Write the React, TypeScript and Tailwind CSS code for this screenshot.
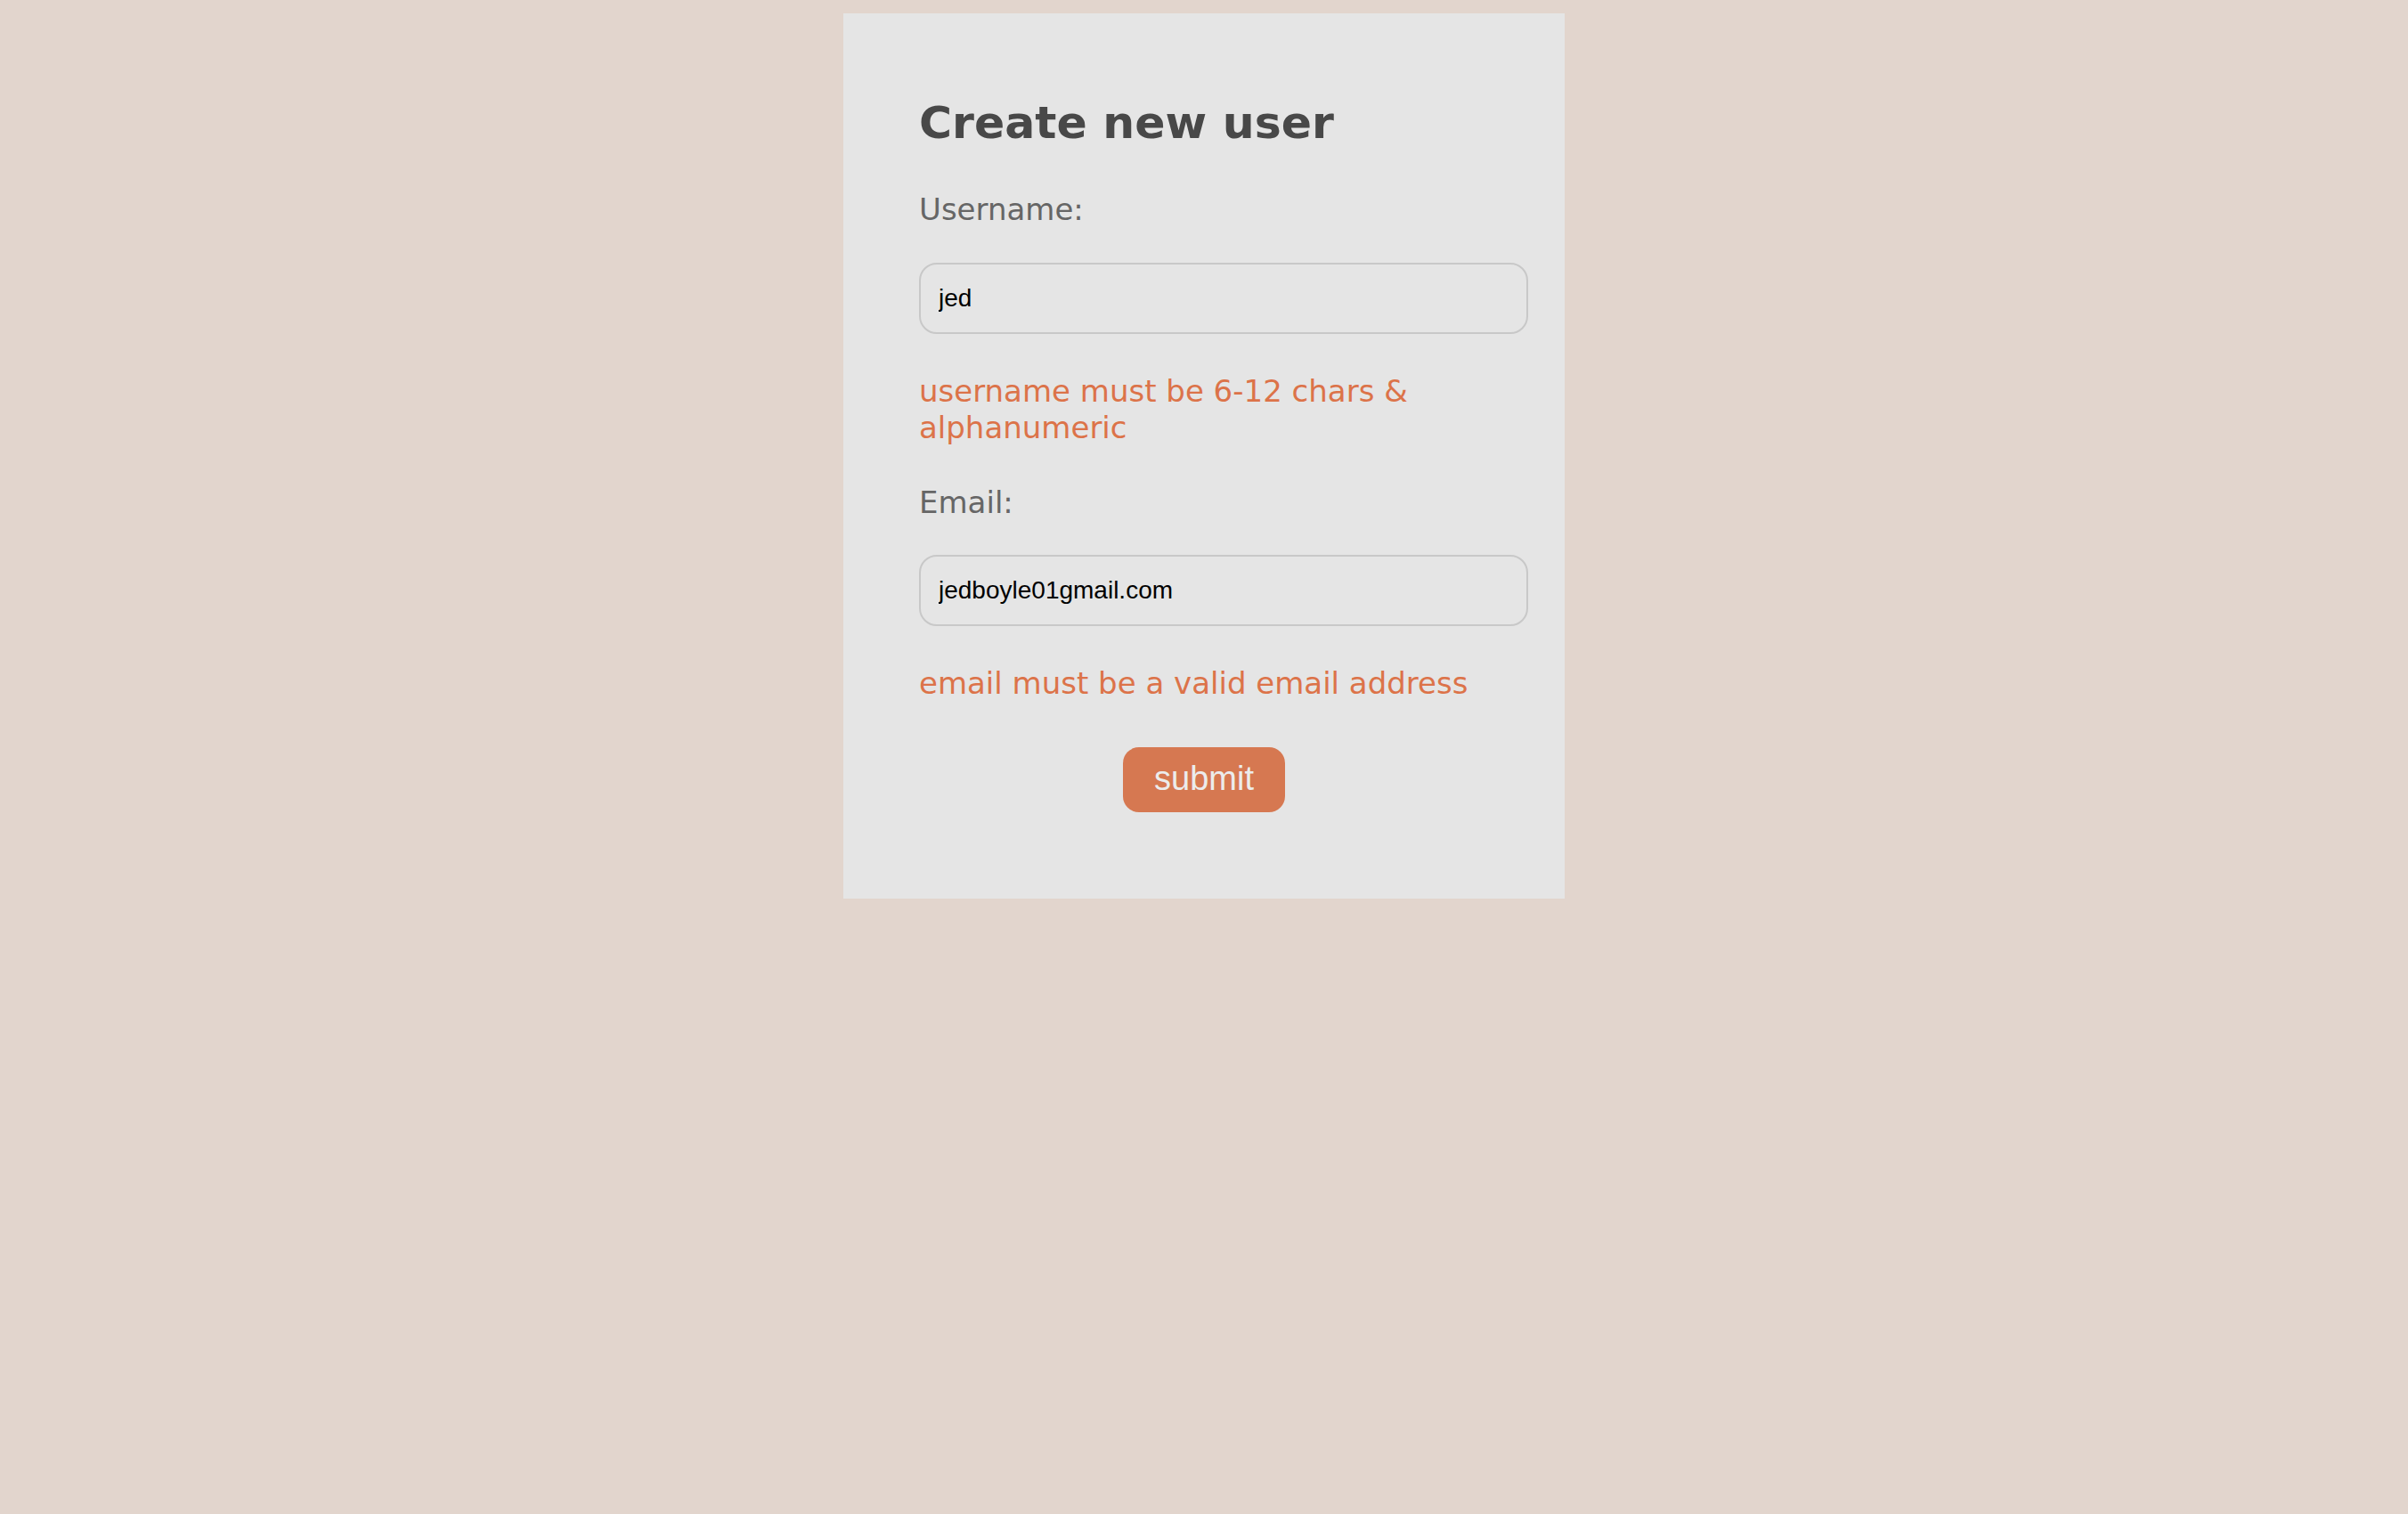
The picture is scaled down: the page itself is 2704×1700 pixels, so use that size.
import React from "react";

const sans = "font-['DejaVu_Sans',Verdana,sans-serif]";
const arial = "font-['Liberation_Sans',Arial,sans-serif]";

function Field({
  label,
  value,
  error,
  first,
}: {
  label: string;
  value: string;
  error: string;
  first?: boolean;
}) {
  return (
    <div className={`flex flex-col ${first ? "mt-[47px]" : "mt-[43px]"}`}>
      <label className="block text-[34px] leading-[40px] text-[#666666] font-['DejaVu_Sans',Verdana,sans-serif]">
        {label}
      </label>
      <input
        type="text"
        defaultValue={value}
        className={`${first ? "mt-[40px]" : "mt-[39px]"} h-[80px] w-[684px] rounded-[20px] border-2 border-[#c8c8c8] bg-[#e5e5e5] pl-[20px] text-[28px] text-black outline-none font-['Liberation_Sans',Arial,sans-serif]`}
      />
      <p className="mt-[44px] text-[34px] leading-[41px] text-[#dc7349] font-['DejaVu_Sans',Verdana,sans-serif]">
        {error}
      </p>
    </div>
  );
}

export default function App() {
  return (
    <div className="min-h-[1700px] w-full bg-[#e2d5cd] pt-[15px]">
      <div className="mx-auto flex w-[810px] flex-col bg-[#e5e5e5] pb-[97px] pt-[93px]">
        <div className="ml-[85px] flex w-[684px] flex-col">
          <h1 className={`${sans} text-[50.5px] font-bold leading-[60px] text-[#484848]`}>
            Create new user
          </h1>
          <Field
            first
            label="Username:"
            value="jed"
            error="username must be 6-12 chars & alphanumeric"
          />
          <Field
            label="Email:"
            value="jedboyle01gmail.com"
            error="email must be a valid email address"
          />
        </div>
        <button
          type="submit"
          className={`${arial} mt-[51px] h-[73px] w-[182px] self-center rounded-[18px] bg-[#d67851] pb-[3px] text-[38px] leading-[70px] text-[#ececec]`}
        >
          submit
        </button>
      </div>
    </div>
  );
}
